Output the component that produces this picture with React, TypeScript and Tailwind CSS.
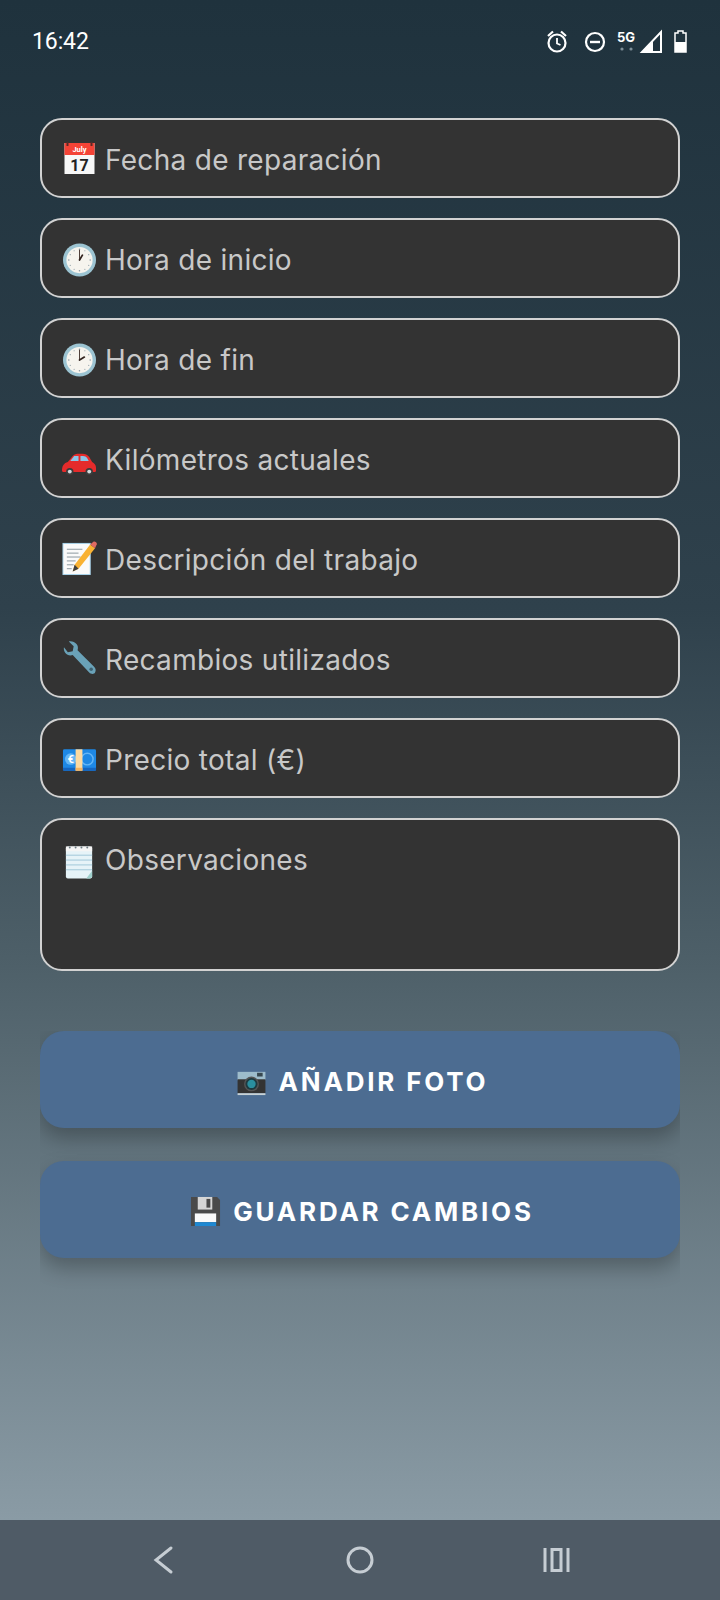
import React from "react";

const Calendar = () => (
  <svg viewBox="0 0 34 36" className="w-[35px] h-[36px] shrink-0">
    <rect x="2" y="3" width="30" height="31" fill="#f7f7f7" />
    <rect x="2" y="3" width="30" height="12" fill="#f44336" />
    <rect x="4" y="2" width="2" height="4" fill="#5a2a28" />
    <rect x="28" y="2" width="2" height="4" fill="#5a2a28" />
    <text x="17" y="12" textAnchor="middle" fontSize="7.5" fontWeight="700" fill="#fff" fontFamily="Roboto, sans-serif">July</text>
    <text x="17" y="30.500" textAnchor="middle" fontSize="16" fontWeight="700" fill="#222" fontFamily="Roboto, sans-serif">17</text>
  </svg>
);

const Clock = ({ hx, hy }: { hx: number; hy: number }) => (
  <svg viewBox="0 0 36 36" className="mt-[4px] w-[35px] h-[36px] shrink-0">
    <circle cx="18" cy="18" r="17" fill="#9cc4d2" />
    <circle cx="18" cy="18" r="13.5" fill="#f6f4ee" />
    <g fill="#8a9aa3">
      <circle cx="18" cy="7" r="0.8" />
      <circle cx="18" cy="29" r="0.8" />
      <circle cx="7" cy="18" r="0.8" />
      <circle cx="29" cy="18" r="0.8" />
      <circle cx="23.5" cy="8.5" r="0.6" />
      <circle cx="27.5" cy="12.5" r="0.6" />
      <circle cx="27.5" cy="23.5" r="0.6" />
      <circle cx="23.5" cy="27.5" r="0.6" />
      <circle cx="12.5" cy="27.5" r="0.6" />
      <circle cx="8.5" cy="23.5" r="0.6" />
      <circle cx="8.5" cy="12.5" r="0.6" />
      <circle cx="12.5" cy="8.5" r="0.6" />
    </g>
    <path d="M18 18V7.5" stroke="#4a3a34" strokeWidth="1" />
    <path d={`M18 18L${hx} ${hy}`} stroke="#33241f" strokeWidth="1.8" strokeLinecap="round" />
  </svg>
);

const Car = () => (
  <svg viewBox="0 -2 36 36" className="w-[35px] h-[36px] shrink-0">
    <path d="M0 29c0-5 2-8 6-9l5-6c1-1.500 3-2.500 5-2.500h5c3 0 5 1 7 3.500l3 5c2 1 4 3 4 6v3c0 1-1 1.500-2 1.500H2c-1 0-2-.5-2-2z" fill="#e52b2b" />
    <path d="M12.500 14h4.500v5H8.500zM19 14h2.500c2 0 3.500 .8 4.500 2.300l1.500 2.700H19z" fill="#8cc5e8" />
    <circle cx="8" cy="30" r="3.800" fill="#3c3c3c" />
    <circle cx="8" cy="30" r="2" fill="#cfd8dc" />
    <circle cx="28" cy="30" r="3.800" fill="#3c3c3c" />
    <circle cx="28" cy="30" r="2" fill="#cfd8dc" />
  </svg>
);

const Memo = () => (
  <svg viewBox="0 0 36 36" className="w-[35px] h-[36px] shrink-0">
    <rect x="1" y="3" width="28" height="32" fill="#fafafa" stroke="#a8d4ec" strokeWidth="1" />
    <g stroke="#7d8b93" strokeWidth="0.9">
      <path d="M5 9h16M5 13h12M5 17h14M5 21h9M5 25h7M5 29h5" />
    </g>
    <path d="M29 4l5 4-17 21-6 3 2-7z" fill="#f9b233" />
    <path d="M29 4l3-2.500c1-.8 2-.6 3 .3s1.200 2.200.3 3.200L34 8z" fill="#e06a62" />
    <path d="M11 32l2-7 4 4z" fill="#3e3e3e" />
  </svg>
);

const Wrench = () => (
  <svg viewBox="0 0 36 36" className="w-[35px] h-[36px] shrink-0">
    <path d="M2 7c-1 5 4 10 9 8l17 18c2 2 5 2 6 0s1-4-1-6L16 10c2-5-3-10-9-9l5 5-1 5-5 1z" fill="#6aa2b8" />
    <circle cx="30" cy="29.500" r="1.800" fill="#3e6272" />
  </svg>
);

const Banknote = () => (
  <svg viewBox="0 0 36 36" className="mt-[4px] w-[35px] h-[36px] shrink-0">
    <rect x="1" y="7" width="34" height="22" rx="1.500" fill="#1e88e5" />
    <rect x="1" y="26" width="34" height="3" fill="#1565c0" />
    <circle cx="9" cy="17" r="6" fill="#64b5f6" />
    <circle cx="26" cy="17" r="6" fill="none" stroke="#64b5f6" strokeWidth="1.500" />
    <text x="9" y="21" textAnchor="middle" fontSize="11" fontWeight="700" fill="#fff" fontFamily="Roboto, sans-serif">€</text>
    <rect x="14" y="7" width="7" height="22" fill="#fdd9a0" />
    <rect x="14" y="26" width="7" height="3" fill="#f5b25c" />
  </svg>
);

const Notepad = () => (
  <svg viewBox="0 0 36 36" className="mt-[4px] w-[35px] h-[36px] shrink-0">
    <rect x="4" y="2" width="27" height="33" rx="2" fill="#e6f3f8" />
    <path d="M4 11h27M4 16h27M4 21h27M4 26h27" stroke="#9fc6d8" strokeWidth="1" />
    <rect x="4" y="2" width="27" height="5" fill="#f5f5f5" />
    <g fill="#6b7b83">
      <circle cx="8" cy="3" r="1" />
      <circle cx="14" cy="3" r="1" />
      <circle cx="20" cy="3" r="1" />
      <circle cx="26" cy="3" r="1" />
    </g>
    <path d="M31 27l-6 8h4l2-2z" fill="#9fd0cc" />
  </svg>
);

const Camera = () => (
  <svg viewBox="0 0 32 28" className="mt-[6px] w-[31px] h-[26px] shrink-0">
    <rect x="1" y="2" width="30" height="9" fill="#9dbccb" />
    <rect x="22" y="3" width="6" height="4" fill="#37474f" />
    <rect x="1" y="10" width="30" height="15" fill="#333" />
    <circle cx="16" cy="15" r="8" fill="#555" />
    <circle cx="16" cy="15" r="6.500" fill="#1d3a40" />
    <circle cx="16" cy="15" r="4.500" fill="#2a8f9f" />
    <rect x="1" y="25" width="30" height="2" fill="#c8d2d6" />
  </svg>
);

const Floppy = () => (
  <svg viewBox="0 0 32 32" className="mt-[4px] w-[31px] h-[31px] shrink-0">
    <path d="M1 1h27l3 3v27H1z" fill="#4a4a4a" />
    <rect x="8" y="1" width="15" height="13" fill="#d6d6d6" />
    <rect x="17" y="3" width="4" height="9" fill="#4a4a4a" />
    <rect x="5" y="18" width="22" height="9" fill="#fafafa" />
    <rect x="5" y="27" width="22" height="4" fill="#1e88d2" />
  </svg>
);

const rows = [
  { icon: <Calendar />, label: "Fecha de reparación" },
  { icon: <Clock hx={21} hy={13} />, label: "Hora de inicio" },
  { icon: <Clock hx={23} hy={15} />, label: "Hora de fin" },
  { icon: <Car />, label: "Kilómetros actuales" },
  { icon: <Memo />, label: "Descripción del trabajo" },
  { icon: <Wrench />, label: "Recambios utilizados" },
  { icon: <Banknote />, label: "Precio total (€)" },
];

const Field = ({ icon, label }: { icon: React.ReactNode; label: string }) => (
  <div className="flex h-[80px] items-center gap-[8px] rounded-[22px] border-2 border-[#d2d2d2] bg-[#333333] pl-[20px]">
    {icon}
    <span className="pt-[3px] text-[28px] leading-[36px] tracking-[0.3px] text-[#c8c8c8]">{label}</span>
  </div>
);

const ActionButton = ({ icon, label }: { icon: React.ReactNode; label: string }) => (
  <button className="flex h-[97px] w-full items-center justify-center gap-[12px] rounded-[24px] bg-[#4c6c91] pl-[4px] shadow-[0_10px_20px_rgba(0,0,0,0.25)]">
    {icon}
    <span className="pt-[3px] text-[26px] font-bold tracking-[2.8px] text-white">{label}</span>
  </button>
);

export default function App() {
  return (
    <div className="flex h-[1600px] w-[720px] flex-col font-['Inter',sans-serif]">
      <div className="flex flex-1 flex-col bg-[linear-gradient(180deg,#1f323d_0%,#2f414c_40%,#4d5f68_63%,#8a9ba5_100%)]">
        <header className="flex h-[84px] items-center pl-[32px] text-white">
          <span className="font-['Roboto',sans-serif] text-[23px] font-normal tracking-[-0.1px]">16:42</span>
          <div className="relative ml-auto mr-[20px] h-[84px] w-[160px]">
            <svg viewBox="0 0 160 84" className="h-[84px] w-[160px]" fill="none" stroke="#fff">
              {/* alarm */}
              <circle cx="17" cy="43" r="8.500" strokeWidth="2.200" />
              <path d="M17 38v5.500l3.500 1.500" strokeWidth="1.800" />
              <path d="M8 36l5-4.500M26 36l-5-4.500" strokeWidth="2.200" />
              {/* do not disturb */}
              <circle cx="55" cy="42" r="9" strokeWidth="2.200" />
              <path d="M50 42h10" strokeWidth="2.400" />
              {/* mobile signal */}
              <circle cx="82" cy="49" r="1.600" fill="#7f8f99" stroke="none" />
              <circle cx="91" cy="49" r="1.600" fill="#7f8f99" stroke="none" />
              <path d="M121 32v20h-19z" strokeWidth="2" />
              <path d="M102 52l11-11v11z" fill="#fff" stroke="none" />
              {/* battery */}
              <path d="M138 31h5v2h3v19h-11V33h3z" strokeWidth="1.500" fill="none" />
              <rect x="135" y="42" width="11" height="10" fill="#fff" stroke="none" />
            </svg>
            <span className="absolute left-[77px] top-[31px] text-[13px] font-bold leading-[13px]">5G</span>
          </div>
        </header>

        <div className="flex flex-col gap-[20px] px-[40px] pt-[34px]">
          {rows.map((r) => (
            <Field key={r.label} icon={r.icon} label={r.label} />
          ))}
          <div className="flex h-[153px] items-start gap-[8px] rounded-[22px] border-2 border-[#d2d2d2] bg-[#333333] pl-[20px] pt-[20px]">
            <Notepad />
            <span className="pt-[2px] text-[28px] leading-[36px] tracking-[0.3px] text-[#c8c8c8]">Observaciones</span>
          </div>
        </div>

        {/* the scroller clips the button shadows at its own sides */}
        <div className="mx-[40px] mt-[60px] flex flex-col gap-[33px] overflow-hidden pb-[40px]">
          <ActionButton icon={<Camera />} label="AÑADIR FOTO" />
          <ActionButton icon={<Floppy />} label="GUARDAR CAMBIOS" />
        </div>
      </div>

      <nav className="relative flex h-[80px] items-center bg-[#4f5b66]">
        <svg viewBox="0 0 720 80" className="h-[80px] w-[720px]" fill="none" stroke="#c6cdd3" strokeWidth="3">
          <path d="M171 28l-15 12 15 12" strokeLinecap="round" strokeLinejoin="miter" />
          <circle cx="360" cy="40" r="12" />
          <path d="M545 28v24M568 28v24" />
          <rect x="552" y="29.500" width="9" height="21" />
        </svg>
      </nav>
    </div>
  );
}
